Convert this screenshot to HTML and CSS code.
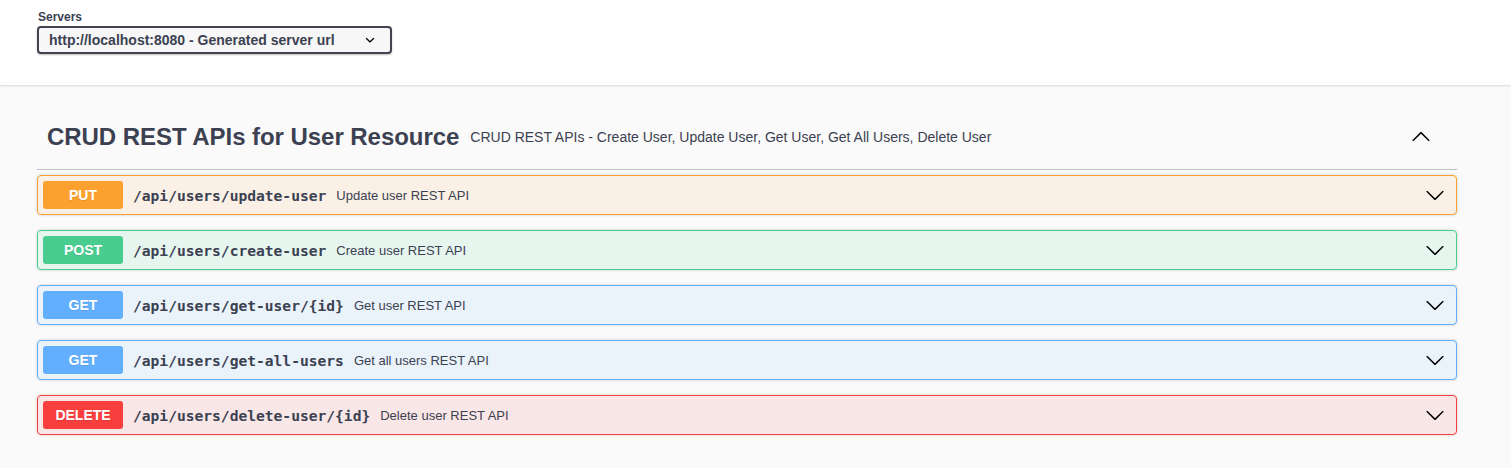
FILE: index.html
```html
<!DOCTYPE html>
<html lang="en">
<head>
<meta charset="utf-8">
<title>Swagger UI</title>
<link rel="stylesheet" href="styles.css">
</head>
<body>
<div class="scheme-container">
  <div class="wrapper">
    <div class="servers-title">Servers</div>
    <div class="servers-select">
      <span>http://localhost:8080 - Generated server url</span>
      <svg class="select-arrow" viewBox="0 0 20 20" width="12" height="12"><path d="M13.418 7.859a.695.695 0 0 1 .978 0 .68.68 0 0 1 0 .969l-3.908 3.83a.697.697 0 0 1-.979 0l-3.908-3.83a.68.68 0 0 1 0-.969.695.695 0 0 1 .978 0L10 11l3.418-3.141z" fill="#000"/></svg>
    </div>
  </div>
</div>

<div class="wrapper section">
  <div class="opblock-tag">
    <span class="tag-title">CRUD REST APIs for User Resource</span>
    <span class="tag-desc">CRUD REST APIs - Create User, Update User, Get User, Get All Users, Delete User</span>
    <span class="tag-toggle">
      <svg viewBox="0 0 20 20" width="20" height="20"><path d="M17.418 14.908c.272.268.709.268.979 0s.271-.701 0-.969l-7.908-7.83c-.27-.268-.707-.268-.979 0l-7.908 7.83c-.27.268-.27.701 0 .969.271.268.709.268.979 0L10 7.767l7.418 7.141z" fill="#000"/></svg>
    </span>
  </div>

  <div class="opblock put">
    <span class="method">PUT</span>
    <span class="path">/api/users/update-user</span>
    <span class="desc">Update user REST API</span>
    <span class="arrow"><svg viewBox="0 0 20 20" width="20" height="20"><path d="M17.418 6.109c.272-.268.709-.268.979 0s.271.701 0 .969l-7.908 7.83c-.27.268-.707.268-.979 0l-7.908-7.830c-.27-.268-.27-.701 0-.969.271-.268.709-.268.979 0L10 13.25l7.418-7.141z" fill="#000"/></svg></span>
  </div>

  <div class="opblock post">
    <span class="method">POST</span>
    <span class="path">/api/users/create-user</span>
    <span class="desc">Create user REST API</span>
    <span class="arrow"><svg viewBox="0 0 20 20" width="20" height="20"><path d="M17.418 6.109c.272-.268.709-.268.979 0s.271.701 0 .969l-7.908 7.83c-.27.268-.707.268-.979 0l-7.908-7.83c-.27-.268-.27-.701 0-.969.271-.268.709-.268.979 0L10 13.25l7.418-7.141z" fill="#000"/></svg></span>
  </div>

  <div class="opblock get">
    <span class="method">GET</span>
    <span class="path">/api/users/get-user/{id}</span>
    <span class="desc">Get user REST API</span>
    <span class="arrow"><svg viewBox="0 0 20 20" width="20" height="20"><path d="M17.418 6.109c.272-.268.709-.268.979 0s.271.701 0 .969l-7.908 7.83c-.27.268-.707.268-.979 0l-7.908-7.83c-.27-.268-.27-.701 0-.969.271-.268.709-.268.979 0L10 13.25l7.418-7.141z" fill="#000"/></svg></span>
  </div>

  <div class="opblock get">
    <span class="method">GET</span>
    <span class="path">/api/users/get-all-users</span>
    <span class="desc">Get all users REST API</span>
    <span class="arrow"><svg viewBox="0 0 20 20" width="20" height="20"><path d="M17.418 6.109c.272-.268.709-.268.979 0s.271.701 0 .969l-7.908 7.83c-.27.268-.707.268-.979 0l-7.908-7.83c-.27-.268-.27-.701 0-.969.271-.268.709-.268.979 0L10 13.25l7.418-7.141z" fill="#000"/></svg></span>
  </div>

  <div class="opblock delete">
    <span class="method">DELETE</span>
    <span class="path">/api/users/delete-user/{id}</span>
    <span class="desc">Delete user REST API</span>
    <span class="arrow"><svg viewBox="0 0 20 20" width="20" height="20"><path d="M17.418 6.109c.272-.268.709-.268.979 0s.271.701 0 .969l-7.908 7.83c-.27.268-.707.268-.979 0l-7.908-7.83c-.27-.268-.27-.701 0-.969.271-.268.709-.268.979 0L10 13.25l7.418-7.141z" fill="#000"/></svg></span>
  </div>
</div>
</body>
</html>
```

FILE: styles.css
```css
* { box-sizing: border-box; }

html, body {
  margin: 0;
  padding: 0;
  background: #fafafa;
  font-family: "Liberation Sans", Arial, sans-serif;
  color: #3b4151;
}

.wrapper {
  margin-left: 37px;
  width: 1420px;
}

.scheme-container {
  background: #fff;
  height: 85px;
  box-shadow: 0 1px 2px 0 rgba(0, 0, 0, 0.15);
  padding-top: 10px;
}

.servers-title {
  font-size: 12px;
  font-weight: 700;
  line-height: 14px;
  margin-left: 1px;
}

.servers-select {
  margin-top: 2px;
  width: 355px;
  height: 28px;
  display: flex;
  align-items: center;
  justify-content: space-between;
  padding: 0 14px 0 10px;
  background: #f7f7f7;
  border: 2px solid #41444e;
  border-radius: 4px;
  box-shadow: 0 1px 2px 0 rgba(0, 0, 0, 0.25);
  font-size: 14px;
  font-weight: 700;
  color: #3b4151;
}

.select-arrow { display: block; transform: scale(1.5); }

.section {
  padding-top: 20px;
  padding-bottom: 19px;
}

.opblock-tag {
  display: flex;
  align-items: center;
  height: 65px;
  padding: 0 20px 0 10px;
  border-bottom: 1px solid rgba(59, 65, 81, 0.3);
  margin-bottom: 5px;
}

.tag-title {
  font-size: 24px;
  font-weight: 700;
  line-height: 28px;
  color: #3b4151;
  letter-spacing: -0.05px;
}

.tag-desc {
  flex: 1;
  font-size: 14px;
  padding: 0 10px 0 11px;
  color: #3b4151;
}

.tag-toggle {
  display: flex;
  margin-right: 6px;
  margin-top: -3px;
}

.tag-toggle svg { display: block; }

.opblock {
  display: flex;
  align-items: center;
  height: 40px;
  padding: 0 5px;
  margin-bottom: 15px;
  border: 1px solid #000;
  border-radius: 4px;
  box-shadow: 0 0 3px rgba(0, 0, 0, 0.19);
}

.method {
  width: 80px;
  height: 28px;
  line-height: 28px;
  text-align: center;
  border-radius: 3px;
  color: #fff;
  font-size: 14px;
  font-weight: 700;
  text-shadow: 0 1px 0 rgba(0, 0, 0, 0.1);
}

.path {
  padding: 0 10px;
  font-family: "DejaVu Sans Mono", "Liberation Mono", monospace;
  font-size: 14.6px;
  font-weight: 700;
  color: #3b4151;
}

.desc {
  flex: 1;
  font-size: 13px;
  color: #3b4151;
}

.arrow {
  display: flex;
  margin-right: 6px;
}

.arrow svg { display: block; }

.put { background: rgba(252, 161, 48, 0.1); border-color: #fca130; }
.put .method { background: #fca130; }

.post { background: rgba(73, 204, 144, 0.1); border-color: #49cc90; }
.post .method { background: #49cc90; }

.get { background: rgba(97, 175, 254, 0.1); border-color: #61affe; }
.get .method { background: #61affe; }

.delete { background: rgba(249, 62, 62, 0.1); border-color: #f93e3e; }
.delete .method { background: #f93e3e; }
```
